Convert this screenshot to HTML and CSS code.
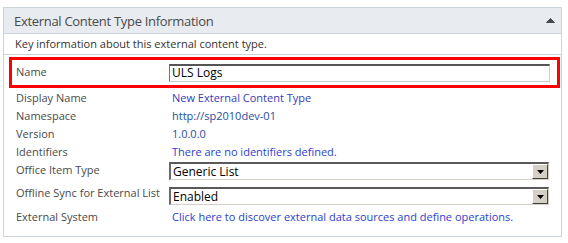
FILE: index.html
```html
<!DOCTYPE html>
<html>
<head>
<meta charset="utf-8">
<link rel="stylesheet" href="styles.css">
</head>
<body>
<div class="panel">
  <div class="header">
    <span class="title">External Content Type Information</span>
    <svg class="caret" width="9" height="6" viewBox="0 0 9 6"><path d="M0.5 5.5 L4.5 1.5 L8.5 5.5 Z" fill="#4a4a4a" stroke="#4a4a4a" stroke-width="1"/></svg>
  </div>
  <div class="desc">Key information about this external content type.</div>
  <div class="body">
    <div class="row name-row">
      <span class="label">Name</span>
      <div class="input"><span>ULS Logs</span></div>
    </div>
    <div class="row r1"><span class="label">Display Name</span><span class="value v-purple">New External Content Type</span></div>
    <div class="row r2"><span class="label">Namespace</span><span class="value">http://sp2010dev-01</span></div>
    <div class="row r3"><span class="label">Version</span><span class="value">1.0.0.0</span></div>
    <div class="row r4"><span class="label">Identifiers</span><span class="value v-bright">There are no identifiers defined.</span></div>
    <div class="row r5"><span class="label">Office Item Type</span>
      <div class="select"><span class="sel-text">Generic List</span><span class="btn"><svg width="7" height="4" viewBox="0 0 7 4"><path d="M0 0 H7 L3.5 4 Z" fill="#000"/></svg></span></div>
    </div>
    <div class="row r6"><span class="label">Offline Sync for External List</span>
      <div class="select"><span class="sel-text">Enabled</span><span class="btn"><svg width="7" height="4" viewBox="0 0 7 4"><path d="M0 0 H7 L3.5 4 Z" fill="#000"/></svg></span></div>
    </div>
    <div class="row r7"><span class="label">External System</span><span class="value v-bright">Click here to discover external data sources and define operations.</span></div>
  </div>
</div>
</body>
</html>
```

FILE: styles.css
```css
html, body {
  margin: 0;
  padding: 0;
  background: #ffffff;
}
body {
  font-family: "Open Sans", "Noto Sans", sans-serif;
  font-size: 11px;
  color: #444444;
}
.panel {
  margin: 7px 0 0 3px;
  width: 557px;
  height: 228px;
  border: 1px solid #cdd3da;
  box-sizing: content-box;
}
.header {
  height: 25px;
  background: #e8ebf0;
  border-bottom: 1px solid #cdd3da;
  display: flex;
  align-items: center;
  justify-content: space-between;
  padding: 0 6px 0 10px;
}
.title {
  font-size: 13px;
  color: #4a4a4a;
  letter-spacing: -0.3px;
}
.caret {
  margin-top: -1px;
}
.desc {
  height: 20px;
  line-height: 19px;
  border-bottom: 1px solid #cdd3da;
  padding-left: 11px;
  color: #333333;
}
.body {
  padding: 2px 1px 0 5px;
}
.row {
  display: grid;
  grid-template-columns: 153px 1fr;
  padding-left: 7px;
}
.label {
  line-height: 18px;
  color: #4a4a4a;
}
.value {
  line-height: 18px;
  color: #1f4ea0;
  padding-left: 3px;
}
.v-purple { color: #3a3ab8; }
.v-bright { color: #2b3fd0; }
.name-row {
  border: 3px solid #ff0000;
  height: 25px;
  padding-left: 4px;
  grid-template-columns: 153px 381px;
  align-items: start;
}
.name-row .label {
  margin-top: 3px;
}
.input {
  margin-top: 4px;
  height: 18px;
  box-sizing: border-box;
  border-top: 2px solid #555555;
  border-left: 1px solid #777777;
  border-right: 1px solid #cccccc;
  border-bottom: 1px solid #cccccc;
  padding-left: 2px;
  font-size: 12px;
  line-height: 14px;
  color: #000;
}
.r1 { height: 19px; }
.r1 .label, .r1 .value { line-height: 19px; }
.r2, .r3, .r4 { height: 18px; }
.r5 { height: 23px; align-items: start; }
.r6 { height: 22px; align-items: start; }
.r6 .label { line-height: 17px; margin-top: 0; }
.r5 .select { margin-top: 1px; }
.r6 .select { margin-top: 3px; }
.r7 { margin-top: 2px; }
.select {
  width: 380px;
  height: 18px;
  box-sizing: border-box;
  border-top: 2px solid #5a5a5a;
  border-left: 2px solid #6a6a6a;
  border-right: 1px solid #d4d0c8;
  border-bottom: 1px solid #d4d0c8;
  display: flex;
  align-items: center;
  justify-content: space-between;
  background: #fff;
}
.sel-text {
  font-size: 12px;
  color: #000;
  padding-left: 2px;
  line-height: 15px;
}
.btn {
  width: 16px;
  height: 15px;
  box-sizing: border-box;
  background: #d4d0c8;
  border-top: 1px solid #ffffff;
  border-left: 1px solid #ffffff;
  border-right: 1px solid #404040;
  border-bottom: 1px solid #404040;
  display: flex;
  align-items: center;
  justify-content: center;
}
```
